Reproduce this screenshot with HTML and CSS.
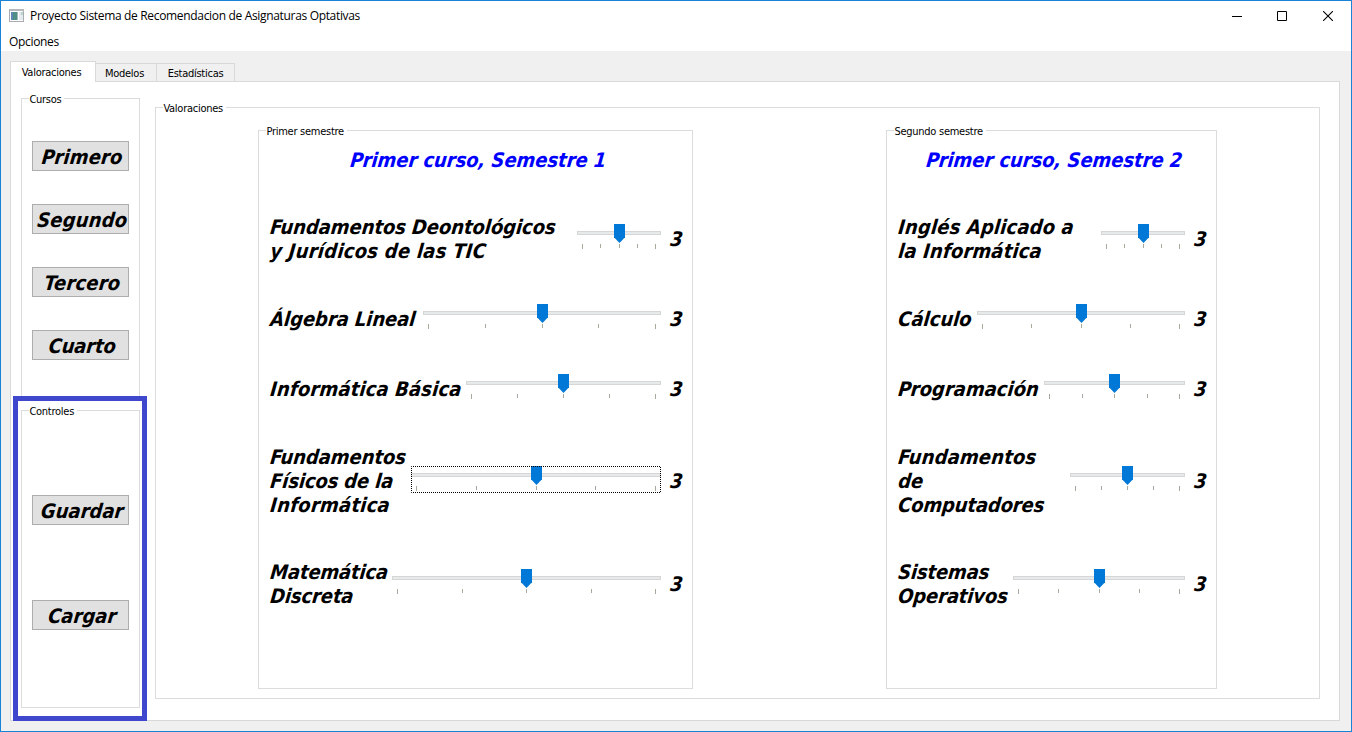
FILE: index.html
```html
<!DOCTYPE html>
<html lang="es">
<head>
<meta charset="utf-8">
<title>Proyecto Sistema de Recomendacion de Asignaturas Optativas</title>
<link rel="stylesheet" href="styles.css">
</head>
<body>
<div class="window">
  <header class="titlebar">
    <svg class="app-icon" width="16" height="14" viewBox="0 0 16 14">
      <rect x=".5" y=".5" width="14" height="12" fill="#fff" stroke="#a8acb0"/>
      <rect x="0" y="0" width="15" height="2" fill="#b4b8bc"/>
      <rect x="2" y="3" width="6" height="8" fill="#4f8f86"/>
      <rect x="2" y="3" width="2" height="8" fill="#5f86b4"/>
      <rect x="8" y="3" width="1" height="8" fill="#9fb8b4"/>
      <rect x="10" y="3" width="4" height="8" fill="#e4eaf0"/>
      <rect x="12" y="3" width="2" height="3" fill="#b9d2c8"/>
    </svg>
    <h1 class="title">Proyecto Sistema de Recomendacion de Asignaturas Optativas</h1>
    <div class="window-buttons">
      <svg width="10" height="10" viewBox="0 0 10 10"><path d="M0 5.5H10" stroke="#000"/></svg>
      <svg width="10" height="10" viewBox="0 0 10 10"><path d="M.5 .5H9.5V9.5H.5Z" fill="none" stroke="#000"/></svg>
      <svg class="close" width="10" height="10" viewBox="0 0 10 10"><path d="M0 0L10 10M10 0L0 10" stroke="#000" stroke-width="1.1"/></svg>
    </div>
  </header>
  <nav class="menubar"><span>Opciones</span></nav>
  <main class="client">
    <div class="tabs">
      <div class="tab active">Valoraciones</div>
      <div class="tab models">Modelos</div>
      <div class="tab stats">Estadísticas</div>
    </div>
    <div class="pane">
      <aside class="sidebar">
        <section class="group courses">
          <h2 class="legend">Cursos</h2>
          <button class="btn fit-plus"><span>Primero</span></button>
          <button class="btn fit-plus"><span>Segundo</span></button>
          <button class="btn fit-plus"><span>Tercero</span></button>
          <button class="btn fit-minus"><span>Cuarto</span></button>
        </section>
        <section class="group controls">
          <h2 class="legend">Controles</h2>
          <button class="btn"><span>Guardar</span></button>
          <button class="btn"><span>Cargar</span></button>
          <div class="highlight"></div>
        </section>
      </aside>
      <section class="group ratings">
        <h2 class="legend">Valoraciones</h2>
        <section class="group semester first">
          <h3 class="legend">Primer semestre</h3>
          <h4 class="heading">Primer curso, Semestre 1</h4>
          <div class="rows">
            <div class="row">
              <div class="name"><span class="fit-tight">Fundamentos Deontológicos</span><span class="fit-wide">y Jurídicos de las TIC</span></div>
              <div class="slider" style="width:84px"><div class="track"></div><div class="thumb"></div><div class="ticks"><i></i><i></i><i></i><i></i><i></i></div></div>
              <output>3</output>
            </div>
            <div class="row">
              <div class="name"><span class="fit-tight">Álgebra Lineal</span></div>
              <div class="slider" style="width:238px"><div class="track"></div><div class="thumb"></div><div class="ticks"><i></i><i></i><i></i><i></i><i></i></div></div>
              <output>3</output>
            </div>
            <div class="row">
              <div class="name"><span class="fit-plus">Informática Básica</span></div>
              <div class="slider" style="width:195px"><div class="track"></div><div class="thumb"></div><div class="ticks"><i></i><i></i><i></i><i></i><i></i></div></div>
              <output>3</output>
            </div>
            <div class="row">
              <div class="name"><span class="fit-tight">Fundamentos</span><span class="fit-minus">Físicos de la</span><span class="fit-wide">Informática</span></div>
              <div class="slider focused" style="width:250px"><div class="track"></div><div class="thumb"></div><div class="ticks"><i></i><i></i><i></i><i></i><i></i></div>
                <svg class="focus" width="250" height="27"><rect x=".5" y=".5" width="249" height="26" fill="none" stroke="#000" stroke-dasharray="1 1" stroke-dashoffset=".5"/></svg></div>
              <output>3</output>
            </div>
            <div class="row">
              <div class="name"><span class="fit-minus">Matemática</span><span class="fit-minus">Discreta</span></div>
              <div class="slider" style="width:269px"><div class="track"></div><div class="thumb"></div><div class="ticks"><i></i><i></i><i></i><i></i><i></i></div></div>
              <output>3</output>
            </div>
          </div>
        </section>
        <section class="group semester second">
          <h3 class="legend">Segundo semestre</h3>
          <h4 class="heading">Primer curso, Semestre 2</h4>
          <div class="rows">
            <div class="row">
              <div class="name"><span class="fit-plus">Inglés Aplicado a</span><span class="fit-plus">la Informática</span></div>
              <div class="slider" style="width:84px"><div class="track"></div><div class="thumb"></div><div class="ticks"><i></i><i></i><i></i><i></i><i></i></div></div>
              <output>3</output>
            </div>
            <div class="row">
              <div class="name"><span>Cálculo</span></div>
              <div class="slider" style="width:208px"><div class="track"></div><div class="thumb"></div><div class="ticks"><i></i><i></i><i></i><i></i><i></i></div></div>
              <output>3</output>
            </div>
            <div class="row">
              <div class="name"><span>Programación</span></div>
              <div class="slider" style="width:141px"><div class="track"></div><div class="thumb"></div><div class="ticks"><i></i><i></i><i></i><i></i><i></i></div></div>
              <output>3</output>
            </div>
            <div class="row">
              <div class="name"><span class="fit-plus">Fundamentos</span><span>de</span><span class="fit-minus">Computadores</span></div>
              <div class="slider" style="width:115px"><div class="track"></div><div class="thumb"></div><div class="ticks"><i></i><i></i><i></i><i></i><i></i></div></div>
              <output>3</output>
            </div>
            <div class="row">
              <div class="name"><span class="fit-minus">Sistemas</span><span class="fit-minus">Operativos</span></div>
              <div class="slider" style="width:172px"><div class="track"></div><div class="thumb"></div><div class="ticks"><i></i><i></i><i></i><i></i><i></i></div></div>
              <output>3</output>
            </div>
          </div>
        </section>
      </section>
    </div>
  </main>
</div>
</body>
</html>
```
FILE: styles.css
```css
* { box-sizing: border-box; }

body {
  margin: 0;
  font: 11px/14px "DejaVu Sans Condensed", "DejaVu Sans", sans-serif;
  letter-spacing: -0.26px;
  color: #000;
}

h1, h2, h3, h4 { margin: 0; font: inherit; }

.window {
  display: flex;
  flex-direction: column;
  width: 1352px;
  height: 732px;
  border: 1px solid #1883d7;
  background: #fff;
}

/* Title bar and menu */
.titlebar {
  display: flex;
  align-items: center;
  height: 30px;
  padding: 0 18px 0 8px;
}
.title {
  flex: 1;
  margin-left: 5px;
  font: 12px/16px "Open Sans", "Noto Sans", sans-serif;
  letter-spacing: -0.33px;
}
.window-buttons { display: flex; gap: 35px; }
.window-buttons svg { display: block; }
.window-buttons .close { margin-left: 1px; }
.menubar {
  height: 20px;
  padding-left: 8px;
  font: 12px/22px "Open Sans", "Noto Sans", sans-serif;
  letter-spacing: -0.32px;
}

/* Tabs */
.client {
  display: flex;
  flex: 1;
  flex-direction: column;
  padding: 10px 11px 10px 9px;
  background: #f0f0f0;
}
.tabs { display: flex; align-items: flex-end; height: 20px; }
.tab {
  height: 18px;
  border: 1px solid #d9d9d9;
  border-width: 1px 1px 0 0;
  line-height: 20px;
  text-align: center;
}
.tab.active {
  z-index: 1;
  width: 86px;
  height: 21px;
  margin-bottom: -1px;
  border-left-width: 1px;
  background: #fff;
  line-height: 22px;
  padding-right: 3px;
}
.tab.models { width: 61px; padding-right: 3px; }
.tab.stats { width: 78px; }
.pane {
  display: flex;
  flex: 1;
  gap: 15px;
  padding: 16px 19px 12px 10px;
  border: 1px solid #d9d9d9;
  background: #fff;
}

/* Group boxes */
.group { position: relative; border: 1px solid #dcdcdc; }
.legend {
  position: absolute;
  top: -7px;
  left: 7px;
  padding: 0 3px 0 .4px;
  background: #fff;
  line-height: 16px;
  white-space: nowrap;
}
.sidebar { display: flex; flex-direction: column; width: 119px; }
.courses {
  display: flex;
  flex-direction: column;
  gap: 33px;
  align-items: center;
  height: 302px;
  padding-top: 42px;
}
.controls {
  display: flex;
  flex-direction: column;
  gap: 75px;
  align-items: center;
  height: 298px;
  margin-top: 10px;
  padding-top: 84px;
}
.highlight {
  position: absolute;
  inset: -15px -8px -14px -9px;
  border: 5px solid #3f48cc;
}
.ratings {
  display: flex;
  flex: 1;
  justify-content: space-between;
  margin: 9px 0 9px;
  padding: 22px 102px 9px;
}

/* Large italic text */
.btn, .heading, .name, output {
  font: italic bold 20px/24px "DejaVu Sans Condensed", "DejaVu Sans", sans-serif;
  letter-spacing: 0;
  white-space: nowrap;
}
.btn span, .heading, .name span, output {
  transform: translateX(0.7px) skewX(-6deg);
  transform-origin: 0 80%;
}
.btn span { display: block; }
.btn {
  width: 97px;
  height: 30px;
  padding: 1px 0 0 1px;
  border: 1px solid #adadad;
  background: #e1e1e1;
  color: #000;
}
.btn.fit-plus, .fit-plus { letter-spacing: 0.14px; }
.fit-wide { letter-spacing: 0.25px; }
.fit-tight { letter-spacing: -0.08px; }
.btn.fit-minus, .fit-minus { letter-spacing: -0.15px; }

/* Semester panels */
.semester { padding: 17px 7px 0 10px; }
.first { width: 435px; }
.second { width: 331px; }
.heading { color: #00f; text-align: center; letter-spacing: -0.06px; }
.rows {
  display: grid;
  grid-template-columns: minmax(0, 1fr);
  grid-template-rows: 48px 24px 28px 68px 50px;
  gap: 44px;
  margin-top: 43px;
}
.row { display: flex; align-items: center; }
.name { flex: 1; min-width: 0; }
.name span { display: block; }
output { flex: none; width: 16px; margin-left: 8px; }

/* Sliders */
.slider {
  position: relative;
  flex: none;
  height: 27px;
  margin-top: -3px;
  padding-top: 7px;
}
.track { height: 4px; border: 1px solid #d6d6d6; background: #e7eaea; }
.thumb {
  position: absolute;
  top: 0;
  left: calc(50% - 5px);
  left: round(down, calc(50% - 5px), 1px);
  width: 11px;
  height: 19px;
  background: #0078d7;
  clip-path: polygon(0 0, 100% 0, 100% 70%, 5.5px 100%, 0 70%);
}
.ticks {
  display: flex;
  justify-content: space-between;
  padding: 9px 5px 0;
}
.ticks i { width: 1px; height: 4px; background: #a8a89c; }
.ticks i:first-child, .ticks i:last-child { height: 5px; }
.focus { position: absolute; inset: 0; }
```
